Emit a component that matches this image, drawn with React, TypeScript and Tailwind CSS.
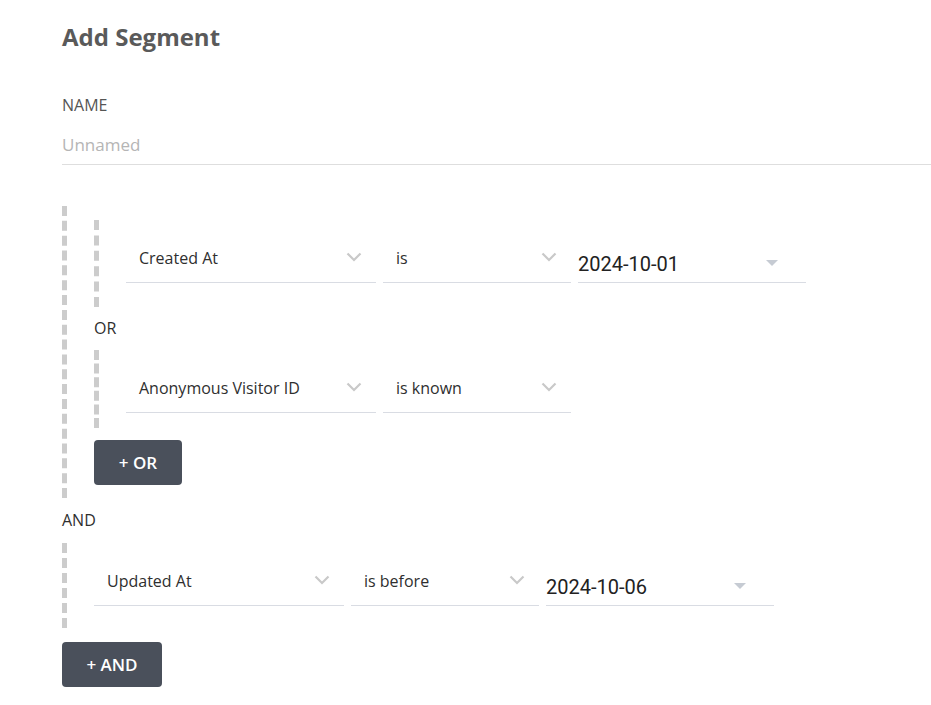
type SelectProps = { value: string; width: string };

function Chevron() {
  return (
    <svg width="16" height="10" viewBox="0 0 16 10" fill="none" className="mb-[7px]">
      <path d="M1.5 1.5 L8 8 L14.5 1.5" stroke="#c9c9c9" strokeWidth="2.2" />
    </svg>
  );
}

function Select({ value, width }: SelectProps) {
  return (
    <div
      className={`${width} h-[40px] flex items-end justify-between pl-[13px] pr-[14px] pb-[13px] border-b border-[#d9dce3] text-[16px] leading-[22px] text-[#2f2f2f]`}
    >
      <span>{value}</span>
      <Chevron />
    </div>
  );
}

function DateField({ value }: { value: string }) {
  return (
    <div className="w-[228px] h-[40px] flex items-end justify-between pl-0 pr-[28px] pb-[5px] border-b border-[#d9dce3]">
      <span className="font-['Roboto',sans-serif] font-normal text-[20px] leading-[26px] text-[#222]">
        {value}
      </span>
      <span className="mb-[11px] w-0 h-0 border-l-[6px] border-r-[6px] border-t-[6px] border-l-transparent border-r-transparent border-t-[#c6cbd3]" />
    </div>
  );
}

export default function App() {
  return (
    <div className="bg-white min-h-[705px] pl-[62px] pt-[21px] font-['Open_Sans',sans-serif]">
      <h1 className="text-[24px] font-bold leading-[32px] text-[#5a5a5a]">
        Add Segment
      </h1>

      <div className="mt-[42px] text-[16px] font-medium text-[#555] leading-[21px]">
        NAME
      </div>
      <div className="mt-[16px] pb-[6px] border-b border-[#dedede] text-[17px] leading-[26px] text-[#b5b5b5]">
        Unnamed
      </div>

      <div className="mt-[41px] border-l-[5px] border-dashed border-[#cccccc] pl-[27px] pt-[14px] pb-[13px]">
        <div className="border-l-[5px] border-dashed border-[#cccccc] pl-[27px] pt-[23px] pb-[24px]">
          <div className="flex gap-[7px]">
            <Select value="Created At" width="w-[250px]" />
            <Select value="is" width="w-[188px]" />
            <DateField value="2024-10-01" />
          </div>
        </div>

        <div className="my-[11px] text-[16px] leading-[21px] text-[#2f2f2f]">OR</div>

        <div className="border-l-[5px] border-dashed border-[#cccccc] pl-[27px] pt-[23px] pb-[15px]">
          <div className="flex gap-[7px]">
            <Select value="Anonymous Visitor ID" width="w-[250px]" />
            <Select value="is known" width="w-[188px]" />
          </div>
        </div>

        <button className="mt-[12px] w-[88px] h-[45px] rounded-[4px] bg-[#4a505b] text-white text-[17px] font-semibold">
          + OR
        </button>
      </div>

      <div className="mt-[12px] mb-[13px] text-[16px] leading-[20px] text-[#2f2f2f]">AND</div>

      <div className="border-l-[5px] border-dashed border-[#cccccc] pl-[27px] pt-[23px] pb-[22px]">
        <div className="flex gap-[7px]">
          <Select value="Updated At" width="w-[250px]" />
          <Select value="is before" width="w-[188px]" />
          <DateField value="2024-10-06" />
        </div>
      </div>

      <button className="mt-[14px] w-[100px] h-[45px] rounded-[4px] bg-[#4a505b] text-white text-[17px] font-semibold">
        + AND
      </button>
    </div>
  );
}
